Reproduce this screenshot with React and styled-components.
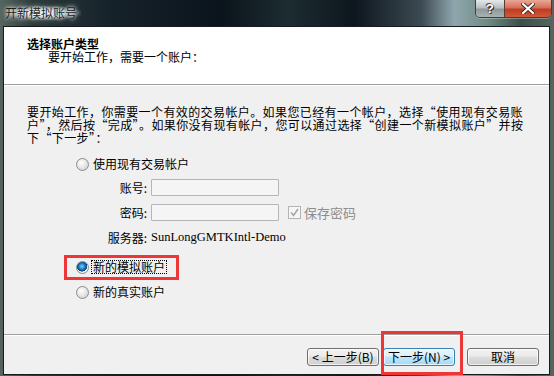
import React from 'react';
import styled, { createGlobalStyle } from 'styled-components';

const GlobalStyle = createGlobalStyle`
    html, body{
        margin: 0;
        padding: 0;
        width: 554px;
        height: 376px;
        overflow: hidden;
        background: #101820;
    }
    body{
        font-family: "Noto Sans CJK SC", "Liberation Sans", sans-serif;
        font-size: 12px;
        color: #000;
    }
`

const Window = styled.div`
    width: 554px;
    height: 376px;
    display: flex;
    flex-direction: column;
    background: linear-gradient(90deg, #56655f 0%, #2c3a3a 6%, #16222a 20%, #0b141c 40%, #1c2c30 52%, #0d161e 64%, #3c4a52 76%, #8fa6ae 82%, #6f8c84 88%, #3b5048 94%, #56655f 100%);
`

const TitleBar = styled.div`
    height: 26px;
    flex-shrink: 0;
    display: flex;
    align-items: flex-start;
    justify-content: space-between;
    padding-right: 2px;
`

const Title = styled.div`
    margin: 6px 0 0 5px;
    line-height: 14px;
    font-size: 12px;
    color: #1c1c1c;
    padding: 0 4px 0 0;
    background: radial-gradient(ellipse at center, rgba(235,240,238,0.85) 30%, rgba(235,240,238,0) 75%);
    text-shadow: 0 0 6px #fff, 0 0 3px #fff;
`

const Controls = styled.div`
    display: flex;
    border: 1px solid #3a3f44;
    border-top: none;
    border-radius: 0 0 5px 5px;
    overflow: hidden;
    box-shadow: 0 1px 0 rgba(255,255,255,0.3);
`

const CtrlButton = styled.div`
    width: ${p => p.w}px;
    height: 17px;
    display: flex;
    align-items: center;
    justify-content: center;
    background: ${p => p.danger
        ? 'linear-gradient(180deg, #e8a896 0%, #d4705a 45%, #c03c22 55%, #d0583a 100%)'
        : 'linear-gradient(180deg, #e6e9ea 0%, #b9bfc2 45%, #8f989c 55%, #a8b2b4 100%)'};
    border-left: ${p => p.danger ? '1px solid #5a3a34' : 'none'};
    color: #fff;
    font-family: "Liberation Sans", sans-serif;
    font-weight: bold;
    font-size: 13px;
    text-shadow: 0 0 1px #222, 1px 1px 0 #333, -1px -1px 0 #555;
`

const Client = styled.div`
    flex: 1;
    margin: 0 4px 1px 3px;
    border: 1px solid #161b20;
    display: flex;
    flex-direction: column;
    background: #f0f0f0;
`

const Header = styled.div`
    height: 58px;
    flex-shrink: 0;
    background: #fff;
    border-bottom: 1px solid #a0a0a0;
    padding: 10px 0 0 23px;
    box-sizing: border-box;
    line-height: 13px;

    .title{
        font-weight: bold;
    }

    .subtitle{
        padding-left: 21px;
    }
`

const Body = styled.div`
    flex: 1;
    border-top: 1px solid #fff;
    padding: 19px 0 0 23px;
    display: flex;
    flex-direction: column;
    align-items: flex-start;
`

const Paragraph = styled.div`
    line-height: 13px;
    letter-spacing: 0.4px;
    white-space: nowrap;
`

const Options = styled.div`
    margin-left: 49px;
    display: flex;
    flex-direction: column;
    align-items: flex-start;
`

const RadioRow = styled.div`
    position: relative;
    display: inline-flex;
    align-items: center;
    height: 16px;
    margin-top: ${p => p.mt}px;
    gap: 2px;

    ${p => p.marked && `
        &::after{
            content: '';
            position: absolute;
            left: -12px;
            right: -12px;
            top: -4px;
            bottom: -5px;
            border: 3px solid #ee3636;
        }
    `}
`

const RadioDot = styled.span`
    width: 11px;
    height: 11px;
    border-radius: 50%;
    border: 1px solid #8a8c8e;
    background: ${p => p.checked
        ? 'radial-gradient(circle at 45% 40%, #7fd0ff 0%, #1a78c0 35%, #0b3f78 55%, #f4f4f4 60%, #dcdcdc 100%)'
        : 'radial-gradient(circle at 40% 35%, #ffffff 0%, #e8e8e8 45%, #c8c8c8 100%)'};
    flex-shrink: 0;
`

const RadioLabel = styled.span`
    padding: 0 2px;
    line-height: 14px;
    outline: ${p => p.focused ? '1px dotted #000' : 'none'};
    outline-offset: -1px;
`

const Form = styled.div`
    margin: 7px 0 0 24px;
    display: grid;
    grid-template-columns: 47px auto;
    grid-auto-rows: 17px;
    row-gap: 8px;
    column-gap: 4px;
    align-items: center;

    .label{
        text-align: right;
        white-space: nowrap;
    }
`

const FieldLine = styled.div`
    display: flex;
    align-items: center;
    height: 17px;
`

const TextBox = styled.div`
    width: 126px;
    height: 15px;
    border: 1px solid #b3b6b8;
    border-radius: 1px;
    background: #f5f5f5;
`

const CheckBox = styled.span`
    width: 11px;
    height: 11px;
    margin-left: 9px;
    border: 1px solid #b4b4b4;
    background: #f6f6f6;
    display: flex;
    align-items: center;
    justify-content: center;
`

const Muted = styled.span`
    color: #8d8d8d;
    margin-left: 3px;
    font-size: 13px;
`

const ServerValue = styled.span`
    font-family: "Liberation Serif", serif;
    font-size: 12.5px;
`

const Footer = styled.div`
    height: 40px;
    flex-shrink: 0;
    border-top: 1px solid #a0a0a0;
    box-shadow: inset 0 1px 0 #fff;
    display: flex;
    justify-content: flex-end;
    align-items: flex-start;
    padding: 13px 10px 0 0;
    box-sizing: border-box;
`

const Button = styled.div`
    position: relative;
    width: 70px;
    height: 16px;
    margin-left: ${p => p.ml}px;
    border: 1px solid ${p => p.primary ? '#3c7fb1' : '#707070'};
    border-radius: 3px;
    background: ${p => p.primary
        ? 'linear-gradient(180deg, #eaf6fd 0%, #d9f0fc 45%, #bee6fd 50%, #a7d9f5 100%)'
        : 'linear-gradient(180deg, #f2f2f2 0%, #ebebeb 45%, #dddddd 50%, #cfcfcf 100%)'};
    box-shadow: inset 0 0 0 1px rgba(255,255,255,0.7);
    display: flex;
    align-items: center;
    justify-content: center;
    line-height: 16px;
    white-space: nowrap;

    ${p => p.marked && `
        &::after{
            content: '';
            position: absolute;
            left: -3px;
            right: -9px;
            top: -18px;
            bottom: -10px;
            border: 3px solid #ee3636;
        }
    `}
`

const App = () => {
    return (
        <>
            <GlobalStyle />
            <Window>
                <TitleBar>
                    <Title>开新模拟账号</Title>
                    <Controls>
                        <CtrlButton w={28}>?</CtrlButton>
                        <CtrlButton w={46} danger>
                            <svg width="14" height="11" viewBox="0 0 14 11">
                                <path d="M2 1 L12 10 M12 1 L2 10" stroke="#3a2a26" strokeWidth="4" strokeLinecap="square" />
                                <path d="M2 1 L12 10 M12 1 L2 10" stroke="#fff" strokeWidth="2.2" strokeLinecap="square" />
                            </svg>
                        </CtrlButton>
                    </Controls>
                </TitleBar>
                <Client>
                    <Header>
                        <div className="title">选择账户类型</div>
                        <div className="subtitle">要开始工作，需要一个账户：</div>
                    </Header>
                    <Body>
                        <Paragraph>
                            要开始工作，你需要一个有效的交易帐户。如果您已经有一个帐户，选择“使用现有交易账<br />
                            户”，然后按“完成”。如果你没有现有帐户，您可以通过选择“创建一个新模拟账户”并按<br />
                            下“下一步”：
                        </Paragraph>
                        <Options>
                            <RadioRow mt={12}>
                                <RadioDot />
                                <RadioLabel>使用现有交易帐户</RadioLabel>
                            </RadioRow>
                            <Form>
                                <span className="label">账号:</span>
                                <FieldLine><TextBox /></FieldLine>
                                <span className="label">密码:</span>
                                <FieldLine>
                                    <TextBox />
                                    <CheckBox>
                                        <svg width="9" height="9" viewBox="0 0 9 9">
                                            <path d="M1 4.5 L3.5 7.5 L8 1" stroke="#a6a6a6" strokeWidth="1.6" fill="none" />
                                        </svg>
                                    </CheckBox>
                                    <Muted>保存密码</Muted>
                                </FieldLine>
                                <span className="label">服务器:</span>
                                <FieldLine><ServerValue>SunLongGMTKIntl-Demo</ServerValue></FieldLine>
                            </Form>
                            <RadioRow mt={13} marked>
                                <RadioDot checked />
                                <RadioLabel focused>新的模拟账户</RadioLabel>
                            </RadioRow>
                            <RadioRow mt={9}>
                                <RadioDot />
                                <RadioLabel>新的真实账户</RadioLabel>
                            </RadioRow>
                        </Options>
                    </Body>
                    <Footer>
                        <Button>&lt; 上一步(B)</Button>
                        <Button ml={4} primary marked>下一步(N) &gt;</Button>
                        <Button ml={12}>取消</Button>
                    </Footer>
                </Client>
            </Window>
        </>
    );
}

export default App;
